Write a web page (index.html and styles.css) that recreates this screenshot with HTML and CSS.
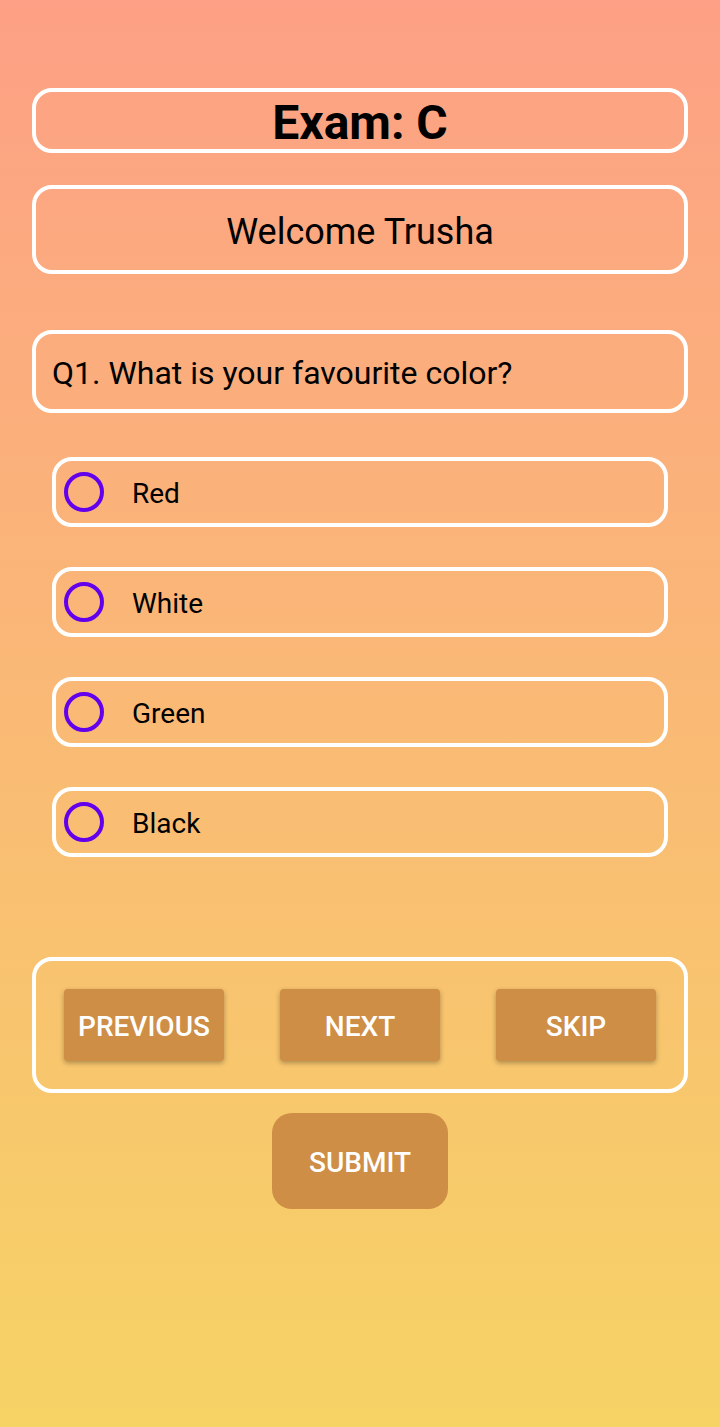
FILE: index.html
```html
<!DOCTYPE html>
<html lang="en">
<head>
<meta charset="utf-8">
<meta name="viewport" content="width=device-width, initial-scale=1">
<title>Exam: C</title>
<link rel="stylesheet" href="styles.css">
</head>
<body>
<main class="exam">
  <h1 class="box title">Exam: C</h1>
  <p class="box welcome">Welcome Trusha</p>
  <form class="quiz">
    <h2 class="box question" id="question">Q1. What is your favourite color?</h2>
    <div class="options" role="radiogroup" aria-labelledby="question">
      <label class="box option"><input class="radio" type="radio" name="color" value="red"><span class="option-text">Red</span></label>
      <label class="box option"><input class="radio" type="radio" name="color" value="white"><span class="option-text">White</span></label>
      <label class="box option"><input class="radio" type="radio" name="color" value="green"><span class="option-text">Green</span></label>
      <label class="box option"><input class="radio" type="radio" name="color" value="black"><span class="option-text">Black</span></label>
    </div>
    <div class="box nav">
      <button class="btn" type="button">PREVIOUS</button>
      <button class="btn" type="button">NEXT</button>
      <button class="btn" type="button">SKIP</button>
    </div>
    <button class="btn submit" type="submit">SUBMIT</button>
  </form>
</main>
</body>
</html>
```
FILE: styles.css
```css
* {
  box-sizing: border-box;
}

body {
  margin: 0;
  min-height: 100vh;
  background: linear-gradient(#fda085, #f6d365);
  color: #000;
  font-family: Roboto, "Liberation Sans", sans-serif;
}

.exam {
  padding: 88px 32px 32px;
}

.box {
  margin: 0;
  border: 4px solid #fff;
  border-radius: 20px;
  font-weight: 400;
}

.title {
  padding-top: 5px;
  font-size: 48px;
  font-weight: 700;
  line-height: 52px;
  text-align: center;
}

.welcome {
  margin-top: 32px;
  padding: 22px 16px 17px;
  font-size: 36px;
  line-height: 42px;
  text-align: center;
}

.quiz {
  display: flex;
  flex-direction: column;
  margin-top: 56px;
}

.question {
  padding: 21px 16px 18px;
  font-size: 32px;
  line-height: 36px;
}

.options {
  display: grid;
  gap: 40px;
  margin: 44px 20px 100px;
}

.option {
  display: flex;
  align-items: center;
  gap: 28px;
  min-height: 70px;
  padding-left: 8px;
  font-size: 28px;
  line-height: 32px;
}

.option-text {
  padding-top: 4px;
}

.radio {
  appearance: none;
  width: 40px;
  height: 40px;
  margin: 0;
  border: 4px solid #6200ee;
  border-radius: 50%;
}

.radio:checked {
  background: radial-gradient(#6200ee 9px, transparent 10px);
}

.nav {
  display: flex;
  justify-content: space-between;
  padding: 28px;
}

.btn {
  width: 160px;
  height: 72px;
  padding: 4px 0 0;
  border: 0;
  border-radius: 4px;
  background: #ce8e46;
  box-shadow: 0 2px 5px rgba(0, 0, 0, 0.3);
  color: #fff;
  font: 500 28px/32px Roboto, "Liberation Sans", sans-serif;
}

.submit {
  align-self: center;
  width: 176px;
  height: 96px;
  margin-top: 20px;
  border-radius: 20px;
  box-shadow: none;
}
```
